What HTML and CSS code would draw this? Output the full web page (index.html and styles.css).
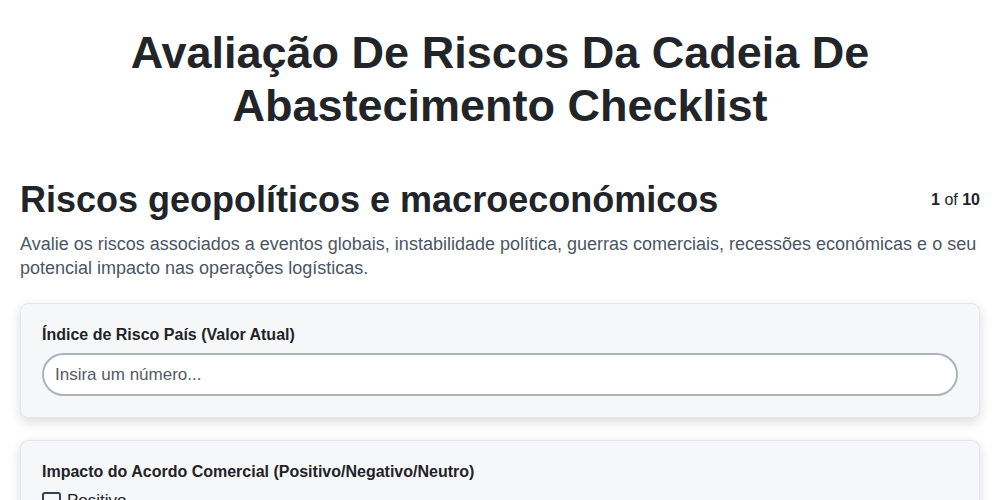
FILE: index.html
```html
<!DOCTYPE html>
<html lang="pt">
  <head>
    <meta charset="UTF-8" />
    <meta name="viewport" content="width=device-width, initial-scale=1.0" />
    <title>Checklist</title>
    <link rel="stylesheet" href="styles.css">
  </head>
  <body>
    <h1 class="page-title">Avaliação De Riscos Da Cadeia De Abastecimento Checklist</h1>
    <div class="section-head">
      <h2 class="section-title">Riscos geopolíticos e macroeconómicos</h2>
      <div class="step"><b>1</b> of <b>10</b></div>
    </div>
    <p class="section-desc">
      Avalie os riscos associados a eventos globais, instabilidade política, guerras comerciais, recessões económicas e o seu potencial impacto nas operações logísticas.
    </p>
    <div class="card">
      <label class="field-label" for="riskIndex">Índice de Risco País (Valor Atual)</label>
      <input class="field-input" id="riskIndex" type="text" placeholder="Insira um número..." />
    </div>
    <div class="card">
      <div class="field-label">Impacto do Acordo Comercial (Positivo/Negativo/Neutro)</div>
      <label class="check"><span class="check-box"></span>Positivo</label>
      <label class="check"><span class="check-box"></span>Negativo</label>
      <label class="check"><span class="check-box"></span>Neutro</label>
    </div>
  </body>
</html>
```

FILE: styles.css
```css
body {
  font-family: "Liberation Sans", Arial, sans-serif;
  color: #212529;
  margin: 0;
  padding: 26px 20px;
  background: #fff;
}
.page-title {
  font-size: 45px;
  line-height: 53px;
  text-align: center;
  margin: 0 0 46px;
  padding: 0 100px;
}
.section-head {
  display: flex;
  justify-content: space-between;
  align-items: center;
}
.section-title {
  font-size: 36px;
  line-height: 43px;
  margin: 0;
}
.step {
  font-size: 16px;
}
.section-desc {
  font-size: 18px;
  line-height: 24px;
  color: #4b5563;
  margin: 11px 0 23px;
}
.card {
  background: #f6f7f9;
  border: 1px solid #e5e7eb;
  border-radius: 8px;
  box-shadow: 0 4px 12px rgba(0, 0, 0, 0.14);
  padding: 21px 21px 21px;
  margin-bottom: 22px;
}
.field-label {
  display: block;
  font-weight: bold;
  font-size: 16px;
  line-height: 20px;
  color: #1f2328;
  margin-bottom: 8px;
}
.field-input {
  box-sizing: border-box;
  display: block;
  width: 100%;
  height: 43px;
  border: 2px solid #adb3ba;
  border-radius: 22px;
  padding: 0 11px;
  font-family: inherit;
  font-size: 17px;
  background: #fff;
}
.field-input::placeholder {
  color: #555b63;
}
.check {
  display: flex;
  align-items: center;
  gap: 6px;
  font-size: 17px;
  line-height: 20px;
  margin-top: 9px;
}
.check-box {
  width: 19px;
  height: 19px;
  border: 2px solid #374151;
  border-radius: 3px;
  box-sizing: border-box;
}
```
